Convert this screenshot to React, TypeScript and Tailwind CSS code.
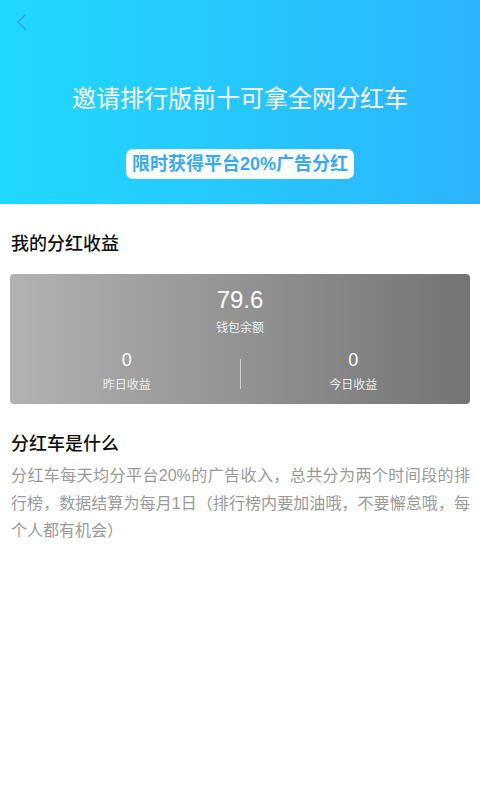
export default function App() {
  return (
    <div
      className="w-[480px] min-h-[800px] bg-white"
      style={{ fontFamily: '"Liberation Sans", "Noto Sans CJK SC", sans-serif' }}
    >
      {/* Banner */}
      <div className="h-[204px] flex flex-col bg-gradient-to-r from-[#1fd9fe] to-[#2cb4fe]">
        <div className="pt-[12px] pl-[14px] h-[32px]">
          <svg width="16" height="20" viewBox="0 0 16 20" fill="none">
            <path d="M11.5 2.5L4 10l7.5 7.5" stroke="#3c9df2" strokeWidth="1.6" strokeLinecap="round" strokeLinejoin="round" />
          </svg>
        </div>
        <h1 className="mt-[51px] text-center text-white text-[24px] leading-[32px] font-normal">
          邀请排行版前十可拿全网分红车
        </h1>
        <div className="mt-[34px] flex justify-center">
          <span className="h-[30px] px-[6px] rounded-[7px] bg-white text-[#38a9f6] text-[18px] leading-[30px] font-bold">
            限时获得平台20%广告分红
          </span>
        </div>
      </div>

      <div className="px-[10px]">
        <h2 className="mt-[28px] pl-[1px] text-[18px] leading-[24px] font-medium text-[#111]">我的分红收益</h2>

        {/* Earnings card */}
        <div className="mt-[18px] rounded-[4px] bg-gradient-to-r from-[#b2b2b2] to-[#747474] pt-[12px] pb-[11px] text-white">
          <div className="text-center text-[24px] leading-[28px]">79.6</div>
          <div className="mt-[6px] text-center text-[12px] leading-[16px] text-[#ececec]">钱包余额</div>
          <div className="mt-[12px] flex px-[4px]">
            <div className="flex-1 flex flex-col items-center">
              <div className="text-[18px] leading-[24px]">0</div>
              <div className="mt-[5px] text-[12px] leading-[16px] text-[#ececec]">昨日收益</div>
            </div>
            <div className="w-px h-[30px] self-end mb-[4px] bg-[#d0d0d0]" />
            <div className="flex-1 flex flex-col items-center">
              <div className="text-[18px] leading-[24px]">0</div>
              <div className="mt-[5px] text-[12px] leading-[16px] text-[#ececec]">今日收益</div>
            </div>
          </div>
        </div>

        <h2 className="mt-[28px] pl-[1px] text-[18px] leading-[24px] font-medium text-[#111]">分红车是什么</h2>
        <p className="mt-[6px] pl-[1px] text-[16px] leading-[27.5px] text-[#9a9a9a] text-justify">
          分红车每天均分平台20%的广告收入，总共分为两个时间段的排行榜，数据结算为每月1日（排行榜内要加油哦，不要懈怠哦，每个人都有机会）
        </p>
      </div>
    </div>
  );
}
